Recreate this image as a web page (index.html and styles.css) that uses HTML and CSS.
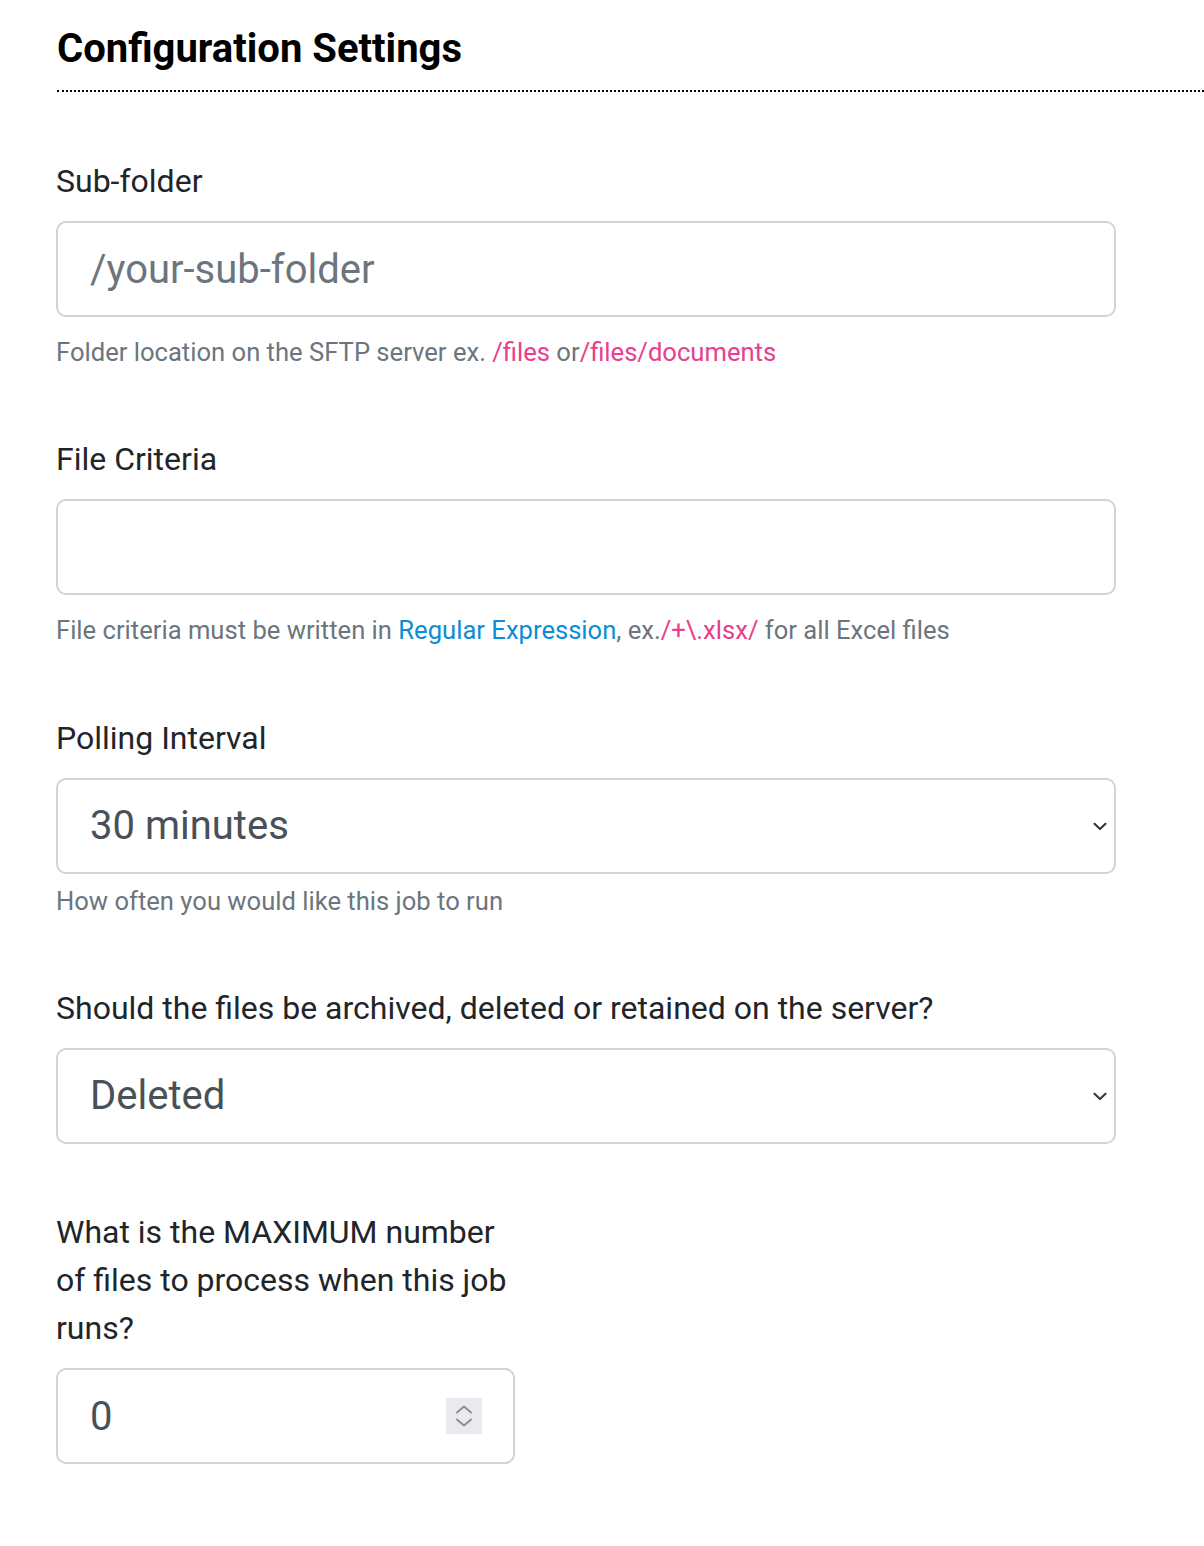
FILE: index.html
```html
<!DOCTYPE html>
<html lang="en">
<head>
<meta charset="utf-8">
<title>Configuration Settings</title>
<link rel="stylesheet" href="styles.css">
</head>
<body>
<main class="page">
  <h2 class="title">Configuration Settings</h2>
  <form class="form">
    <div class="group">
      <label class="label" for="sub">Sub-folder</label>
      <input class="control" id="sub" type="text" placeholder="/your-sub-folder">
      <p class="help">Folder location on the SFTP server ex. <span class="code">/files</span> or<span class="code">/files/documents</span></p>
    </div>
    <div class="group">
      <label class="label" for="crit">File Criteria</label>
      <input class="control" id="crit" type="text">
      <p class="help">File criteria must be written in <a class="link" href="#">Regular Expression</a>, ex.<span class="code">/+\.xlsx/</span> for all Excel files</p>
    </div>
    <div class="group">
      <label class="label" for="poll">Polling Interval</label>
      <div class="select-wrap">
        <select class="control select" id="poll">
          <option>30 minutes</option>
        </select>
        <svg class="chevron" width="14" height="9" viewBox="0 0 14 9"><path d="M1.5 1.8 L7 7 L12.5 1.8" fill="none" stroke="#343a40" stroke-width="2.2" stroke-linecap="round" stroke-linejoin="round"/></svg>
      </div>
      <p class="help help-tight">How often you would like this job to run</p>
    </div>
    <div class="group">
      <label class="label" for="arch">Should the files be archived, deleted or retained on the server?</label>
      <div class="select-wrap">
        <select class="control select" id="arch">
          <option>Deleted</option>
        </select>
        <svg class="chevron" width="14" height="9" viewBox="0 0 14 9"><path d="M1.5 1.8 L7 7 L12.5 1.8" fill="none" stroke="#343a40" stroke-width="2.2" stroke-linecap="round" stroke-linejoin="round"/></svg>
      </div>
    </div>
    <div class="group group-narrow">
      <label class="label" for="max">What is the MAXIMUM number of files to process when this job runs?</label>
      <div class="number-wrap">
        <input class="control number" id="max" type="number" value="0">
        <svg class="spinner" width="36" height="36" viewBox="0 0 36 36"><path d="M11 14.5 L18 8.5 L25 14.5" fill="none" stroke="#8b8b99" stroke-width="2" stroke-linecap="round" stroke-linejoin="round"/><path d="M11 21.5 L18 27.5 L25 21.5" fill="none" stroke="#8b8b99" stroke-width="2" stroke-linecap="round" stroke-linejoin="round"/></svg>
      </div>
    </div>
  </form>
</main>
</body>
</html>
```

FILE: styles.css
```css
* {
  box-sizing: border-box;
}

html, body {
  margin: 0;
  background: #fff;
  overflow-x: hidden;
}

body {
  font-family: Roboto, "Noto Sans", "Liberation Sans", sans-serif;
  color: #212529;
}

.page {
  padding: 0 0 60px 56px;
}

.title {
  margin: 0 0 0 1px;
  padding: 25px 0 17px;
  font-size: 40px;
  line-height: 48px;
  font-weight: 700;
  color: #000;
  border-bottom: 2px dotted #000;
}

.form {
  width: 1060px;
  margin-top: 65px;
}

.group {
  margin-bottom: 64px;
}

.group-narrow {
  width: 459px;
}

.label {
  display: block;
  font-size: 32px;
  line-height: 48px;
  margin-bottom: 16px;
  color: #212529;
}

.control {
  display: block;
  width: 100%;
  height: 96px;
  margin: 0;
  padding: 16px 32px;
  font-family: Roboto, "Noto Sans", sans-serif;
  font-size: 40px;
  line-height: 60px;
  color: #495057;
  background: #fff;
  border: 2px solid #ced4da;
  border-radius: 10px;
  outline: none;
}

.control::placeholder {
  color: #6c757d;
  opacity: 1;
}

.select-wrap,
.number-wrap {
  position: relative;
}

.select {
  -webkit-appearance: none;
  appearance: none;
  padding-right: 60px;
}

.chevron {
  position: absolute;
  right: 9px;
  top: 44px;
  pointer-events: none;
}

.number {
  -moz-appearance: textfield;
  appearance: textfield;
}

.number::-webkit-inner-spin-button,
.number::-webkit-outer-spin-button {
  -webkit-appearance: none;
  margin: 0;
}

.spinner {
  position: absolute;
  right: 33px;
  top: 30px;
  background: #e9e9ee;
}

.help {
  margin: 16px 0 0;
  font-size: 25.6px;
  line-height: 38.4px;
  color: #6c757d;
}

.help-tight {
  margin-top: 8px;
}

.code {
  color: #e83e8c;
}

.link {
  color: #0a8ed6;
  text-decoration: none;
}
```
